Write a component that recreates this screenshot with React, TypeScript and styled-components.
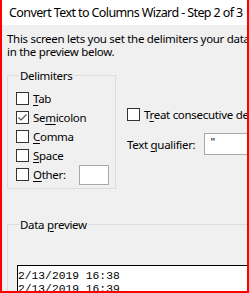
import React from 'react';
import styled, { createGlobalStyle } from 'styled-components';

const GlobalStyle = createGlobalStyle`
  html, body {
    margin: 0;
    padding: 0;
    background: #ffffff;
  }
  body {
    font-family: "Noto Sans", "Open Sans", sans-serif;
    color: #000000;
  }
`;

const Window = styled.div`
  width: 249px;
  height: 293px;
  box-sizing: border-box;
  border: 2px solid #ff0000;
  border-top: none;
  overflow: hidden;
  display: flex;
  flex-direction: column;
  background: #f0f0f0;
`;

const TitleBar = styled.div`
  height: 25px;
  flex: none;
  background: #ffffff;
  padding-left: 7px;
  font-size: 12.5px;
  letter-spacing: -0.6px;
  line-height: 25px;
  white-space: nowrap;
  color: #000;
`;

const Body = styled.div`
  flex: 1;
  padding: 7px 0 0 5px;
  font-size: 11.5px;
  letter-spacing: -0.3px;
  white-space: nowrap;
`;

const Intro = styled.p`
  margin: 0;
  line-height: 13px;
`;

const Row = styled.div`
  display: flex;
  margin-top: 11px;
`;

const Group = styled.fieldset<{ $w: number; $h: number }>`
  margin: 0;
  width: ${(p) => p.$w}px;
  height: ${(p) => p.$h}px;
  box-sizing: border-box;
  border: 1px solid #dcdcdc;
  padding: 0 0 0 8px;
  flex: none;
`;

const Legend = styled.legend`
  padding: 0 1px;
  margin-left: 3px;
  font-size: 11.5px;
  line-height: 13px;
`;

const CheckList = styled.div`
  display: flex;
  flex-direction: column;
  gap: 6px;
  padding-top: 10px;
`;

const CheckRow = styled.label`
  display: flex;
  align-items: center;
  gap: 4px;
  height: 13px;
  line-height: 13px;
`;

const Box = styled.span`
  width: 13px;
  height: 13px;
  box-sizing: border-box;
  border: 1px solid #333333;
  background: #ffffff;
  display: flex;
  align-items: center;
  justify-content: center;
  flex: none;
`;

const Key = styled.span`
  text-decoration: underline;
  text-underline-offset: 2px;
`;

const SmallInput = styled.div<{ $w: number; $h: number }>`
  width: ${(p) => p.$w}px;
  height: ${(p) => p.$h}px;
  box-sizing: border-box;
  border: 1px solid #a9a9a9;
  background: #ffffff;
  margin-left: 9px;
  padding-left: 5px;
  line-height: 15px;
  flex: none;
`;

const RightCol = styled.div`
  display: flex;
  flex-direction: column;
  padding: 39px 0 0 11px;
  gap: 12px;
`;

const QualifierRow = styled.div`
  display: flex;
  align-items: center;
`;

const PreviewWrap = styled.div`
  margin-top: 29px;
`;

const Preview = styled.div`
  margin: 34px 0 0 1px;
  width: 260px;
  height: 40px;
  border: 1px solid #000000;
  background: #ffffff;
  font-family: "Liberation Mono", "Courier New", monospace;
  font-size: 11.3px;
  letter-spacing: 0;
  line-height: 13px;
  padding-top: 4px;
  box-sizing: border-box;
`;

const Check = () => (
  <svg width="11" height="11" viewBox="0 0 11 11">
    <path d="M1.5 5.5 L4 8 L9.5 2.5" fill="none" stroke="#555" strokeWidth="1.2" />
  </svg>
);

const CheckItem: React.FC<{ checked?: boolean; children: React.ReactNode }> = ({ checked, children }) => (
  <CheckRow>
    <Box>{checked && <Check />}</Box>
    <span>{children}</span>
  </CheckRow>
);

export default function App() {
  return (
    <>
      <GlobalStyle />
      <Window>
        <TitleBar>Convert Text to Columns Wizard - Step 2 of 3</TitleBar>
        <Body>
          <Intro>
            This screen lets you set the delimiters your data contains.
            <br />
            in the preview below.
          </Intro>
          <Row>
            <Group $w={109} $h={120}>
              <Legend>Delimiters</Legend>
              <CheckList>
                <CheckItem><Key>T</Key>ab</CheckItem>
                <CheckItem checked>Se<Key>m</Key>icolon</CheckItem>
                <CheckItem><Key>C</Key>omma</CheckItem>
                <CheckItem><Key>S</Key>pace</CheckItem>
                <CheckRow>
                  <Box />
                  <span><Key>O</Key>ther:</span>
                  <SmallInput $w={30} $h={20} />
                </CheckRow>
              </CheckList>
            </Group>
            <RightCol>
              <CheckItem>T<Key>r</Key>eat consecutive delimiters as one</CheckItem>
              <QualifierRow>
                <span>Text <Key>q</Key>ualifier:</span>
                <SmallInput $w={80} $h={22}>"</SmallInput>
              </QualifierRow>
            </RightCol>
          </Row>
          <PreviewWrap>
            <Group $w={260} $h={80}>
              <Legend>Data <Key>p</Key>review</Legend>
              <Preview>
                2/13/2019 16:38
                <br />
                2/13/2019 16:39
              </Preview>
            </Group>
          </PreviewWrap>
        </Body>
      </Window>
    </>
  );
}
